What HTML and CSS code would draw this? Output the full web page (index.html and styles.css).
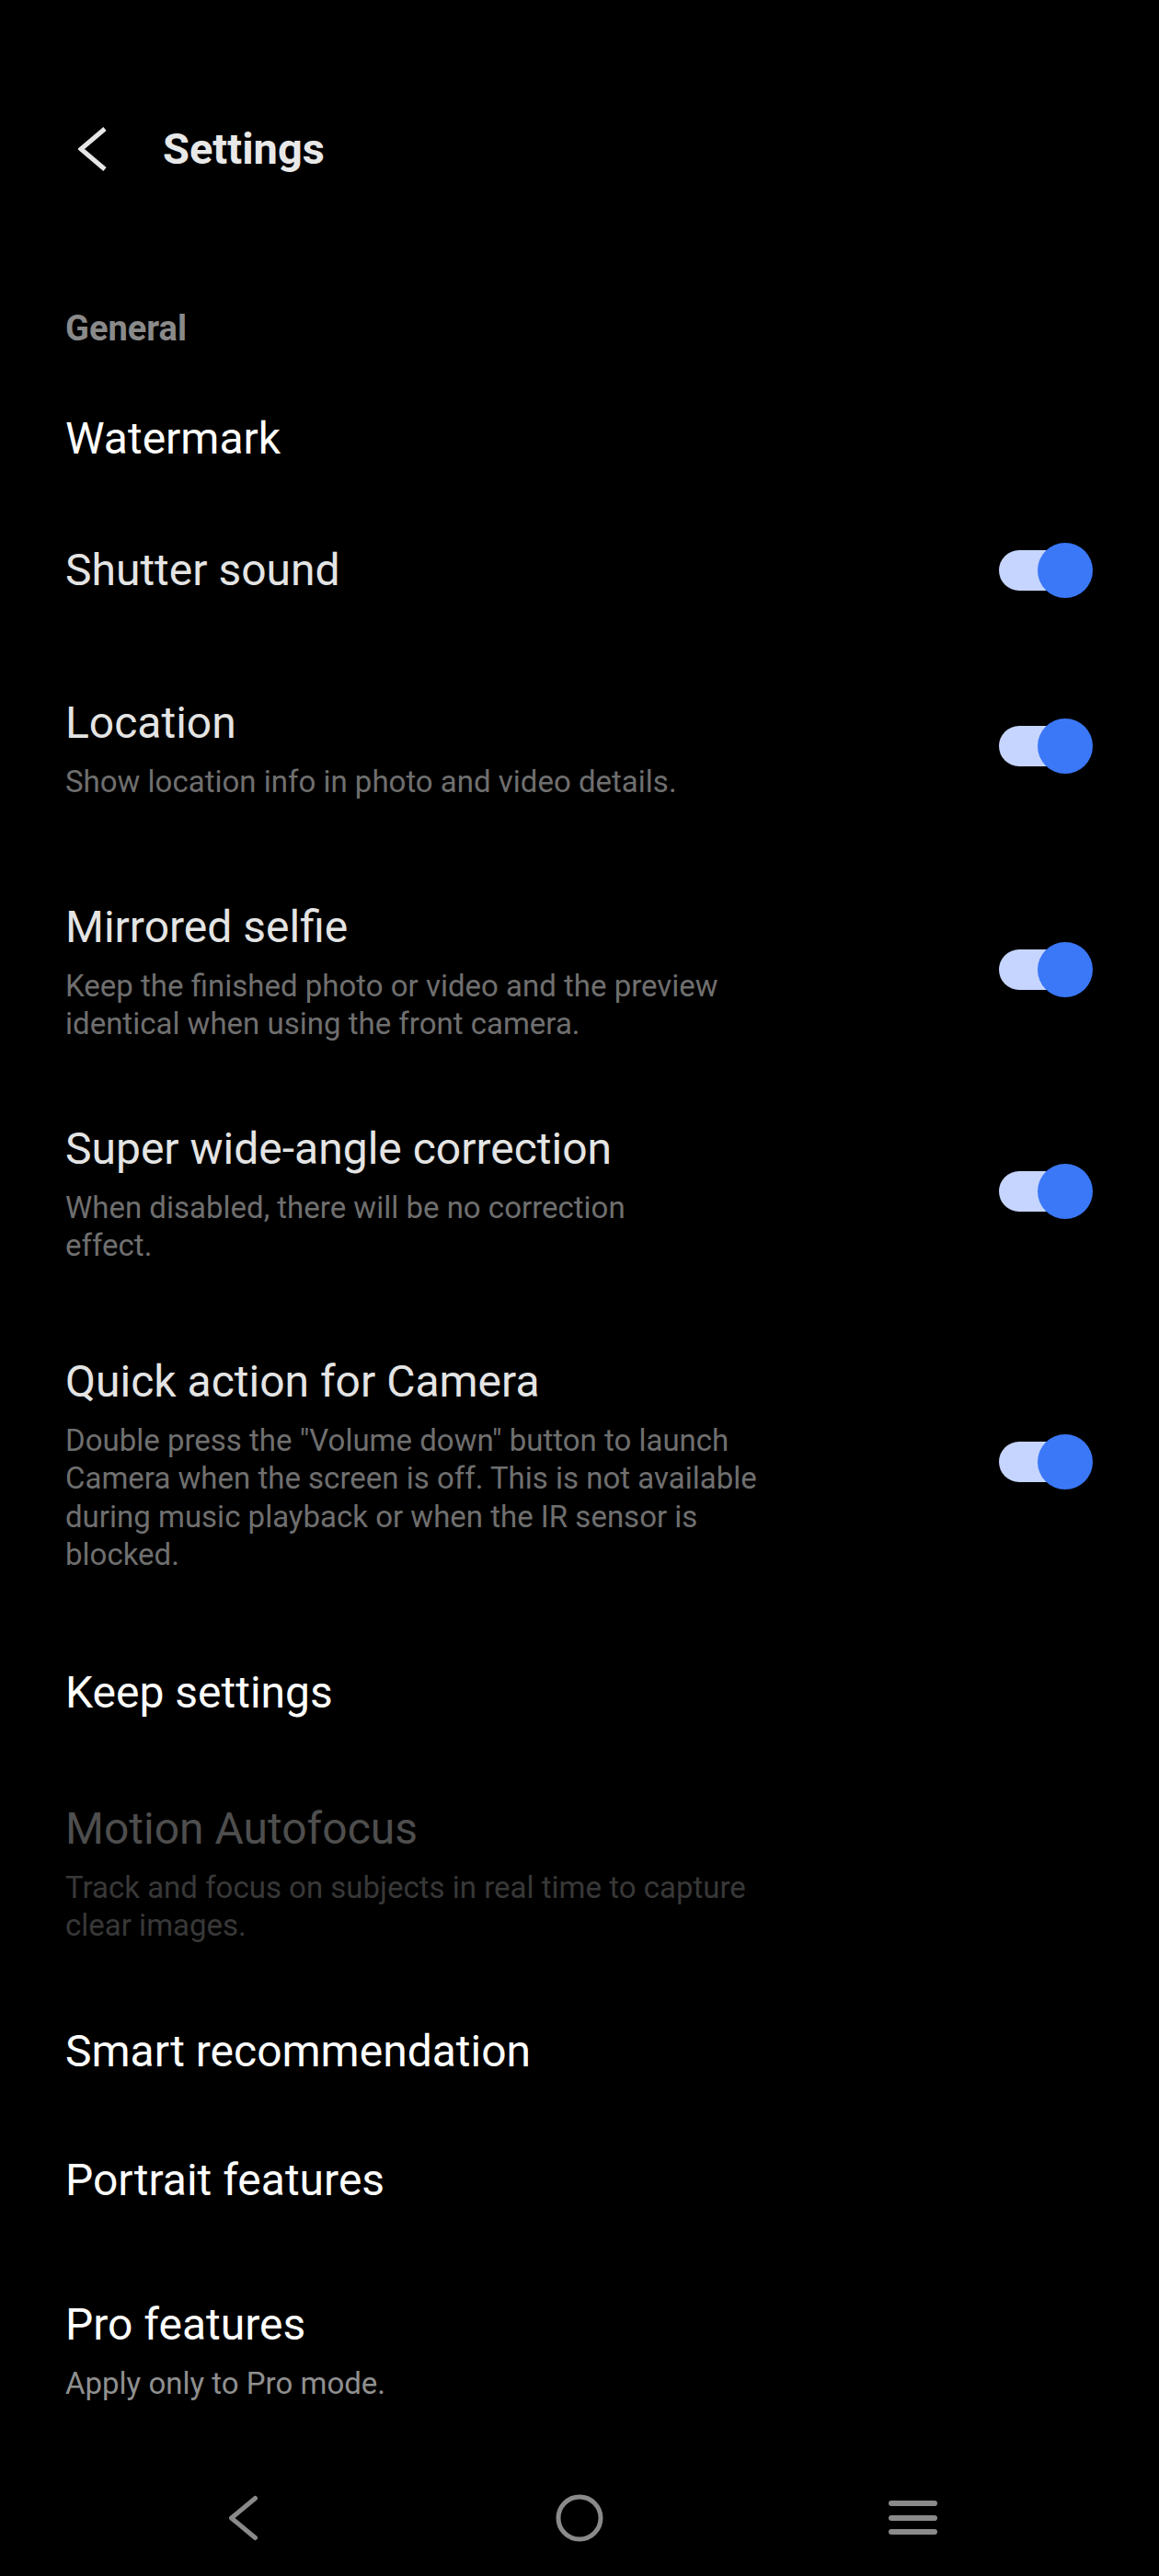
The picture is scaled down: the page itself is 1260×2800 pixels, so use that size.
FILE: index.html
```html
<!DOCTYPE html>
<html lang="en">
<head>
<meta charset="utf-8">
<title>Settings</title>
<link rel="stylesheet" href="styles.css">
</head>
<body>
<div class="screen">
  <header class="topbar">
    <span class="back" aria-label="Back">
      <svg width="32" height="50" viewBox="0 0 32 50"><polyline points="29,3 3,25 29,47" fill="none" stroke="#e6e6e6" stroke-width="5"/></svg>
    </span>
    <h1 class="title">Settings</h1>
  </header>

  <main class="content">
    <h2 class="group-title">General</h2>
    <ul class="list">
      <li class="item item--link">
        <div class="item-text"><div class="item-title">Watermark</div></div>
      </li>
      <li class="item">
        <div class="item-text"><div class="item-title">Shutter sound</div></div>
        <span class="switch"></span>
      </li>
      <li class="item">
        <div class="item-text">
          <div class="item-title">Location</div>
          <div class="item-sub">Show location info in photo and video details.</div>
        </div>
        <span class="switch"></span>
      </li>
      <li class="item">
        <div class="item-text">
          <div class="item-title">Mirrored selfie</div>
          <div class="item-sub">Keep the finished photo or video and the preview<br>identical when using the front camera.</div>
        </div>
        <span class="switch"></span>
      </li>
      <li class="item">
        <div class="item-text">
          <div class="item-title">Super wide-angle correction</div>
          <div class="item-sub">When disabled, there will be no correction<br>effect.</div>
        </div>
        <span class="switch"></span>
      </li>
      <li class="item">
        <div class="item-text">
          <div class="item-title">Quick action for Camera</div>
          <div class="item-sub">Double press the "Volume down" button to launch<br>Camera when the screen is off. This is not available<br>during music playback or when the IR sensor is<br>blocked.</div>
        </div>
        <span class="switch"></span>
      </li>
      <li class="item item--link">
        <div class="item-text"><div class="item-title">Keep settings</div></div>
      </li>
      <li class="item item--disabled">
        <div class="item-text">
          <div class="item-title">Motion Autofocus</div>
          <div class="item-sub">Track and focus on subjects in real time to capture<br>clear images.</div>
        </div>
      </li>
      <li class="item item--link">
        <div class="item-text"><div class="item-title">Smart recommendation</div></div>
      </li>
      <li class="item item--link">
        <div class="item-text"><div class="item-title">Portrait features</div></div>
      </li>
      <li class="item item--link">
        <div class="item-text">
          <div class="item-title">Pro features</div>
          <div class="item-sub">Apply only to Pro mode.</div>
        </div>
      </li>
    </ul>
  </main>

  <nav class="navbar">
    <span class="nav-btn" aria-label="Back">
      <svg width="60" height="60" viewBox="0 0 60 60"><polyline points="40.5,8.5 14.5,30 40.5,51.5" fill="none" stroke="#8a8a8a" stroke-width="5" stroke-linecap="round" stroke-linejoin="round"/></svg>
    </span>
    <span class="nav-btn" aria-label="Home">
      <svg width="60" height="60" viewBox="0 0 60 60"><circle cx="30" cy="30" r="23" fill="none" stroke="#8a8a8a" stroke-width="5"/></svg>
    </span>
    <span class="nav-btn" aria-label="Recents">
      <svg width="60" height="60" viewBox="0 0 60 60"><rect x="3" y="11" width="53" height="6" rx="3" fill="#8a8a8a"/><rect x="3" y="27" width="53" height="6" rx="3" fill="#8a8a8a"/><rect x="3" y="42" width="53" height="6" rx="3" fill="#8a8a8a"/></svg>
    </span>
  </nav>
</div>
</body>
</html>
```

FILE: styles.css
```css
* {
  box-sizing: border-box;
}

html, body {
  margin: 0;
  padding: 0;
  background: #000;
}

body {
  font-family: Roboto, "Noto Sans", "Liberation Sans", sans-serif;
  color: #e4e4e4;
}

.screen {
  min-height: 2800px;
  display: flex;
  flex-direction: column;
  padding-top: 134px;
}

/* ---------- top bar ---------- */
.topbar {
  display: flex;
  align-items: center;
  height: 56px;
  padding-left: 85px;
}

.back {
  display: flex;
  width: 32px;
  height: 50px;
}

.title {
  margin: 0 0 0 60px;
  font-size: 47px;
  line-height: 56px;
  font-weight: 700;
  color: #e8e8e8;
}

/* ---------- content ---------- */
.content {
  padding: 0 72px 0 71px;
}

.group-title {
  margin: 145px 0 0;
  font-size: 38px;
  line-height: 45px;
  font-weight: 700;
  color: #8a8a8a;
}

.list {
  list-style: none;
  margin: 0;
  padding: 0;
}

.item {
  display: flex;
  align-items: center;
}

.list .item:nth-child(1)  { margin-top: 69px; }
.list .item:nth-child(2)  { margin-top: 87px; }
.list .item:nth-child(3)  { margin-top: 110px; }
.list .item:nth-child(4)  { margin-top: 115px; }
.list .item:nth-child(5)  { margin-top: 93px; }
.list .item:nth-child(6)  { margin-top: 105px; }
.list .item:nth-child(7)  { margin-top: 107px; }
.list .item:nth-child(8)  { margin-top: 92px; }
.list .item:nth-child(9)  { margin-top: 94px; }
.list .item:nth-child(10) { margin-top: 84px; }
.list .item:nth-child(11) { margin-top: 101px; }

.item-text {
  flex: 1;
  min-width: 0;
}

.item-title {
  font-size: 48px;
  line-height: 56px;
  font-weight: 400;
  color: #e4e4e4;
}

.item-sub {
  margin-top: 15px;
  margin-bottom: -6px;
  font-size: 33px;
  line-height: 41.5px;
  color: #6f6f6f;
}

.item--link .item-title {
  color: #ffffff;
}

.item--link .item-sub {
  color: #8f8f8f;
}

.item--disabled .item-title {
  color: #4e4e4e;
}

.item--disabled .item-sub {
  color: #383838;
}

/* ---------- switch (on) ---------- */
.switch {
  position: relative;
  flex: none;
  width: 102px;
  height: 44px;
  margin-left: 24px;
}

.switch::before {
  content: "";
  position: absolute;
  left: 0;
  top: 0;
  width: 88px;
  height: 44px;
  border-radius: 22px;
  background: #c6d5ff;
}

.switch::after {
  content: "";
  position: absolute;
  right: 0;
  top: -8px;
  width: 60px;
  height: 60px;
  border-radius: 50%;
  background: #3b78f8;
}

/* ---------- navigation bar ---------- */
.navbar {
  margin-top: auto;
  height: 126px;
  display: flex;
  align-items: center;
  justify-content: center;
  gap: 303px;
}

.nav-btn {
  display: flex;
  width: 60px;
  height: 60px;
}
```
